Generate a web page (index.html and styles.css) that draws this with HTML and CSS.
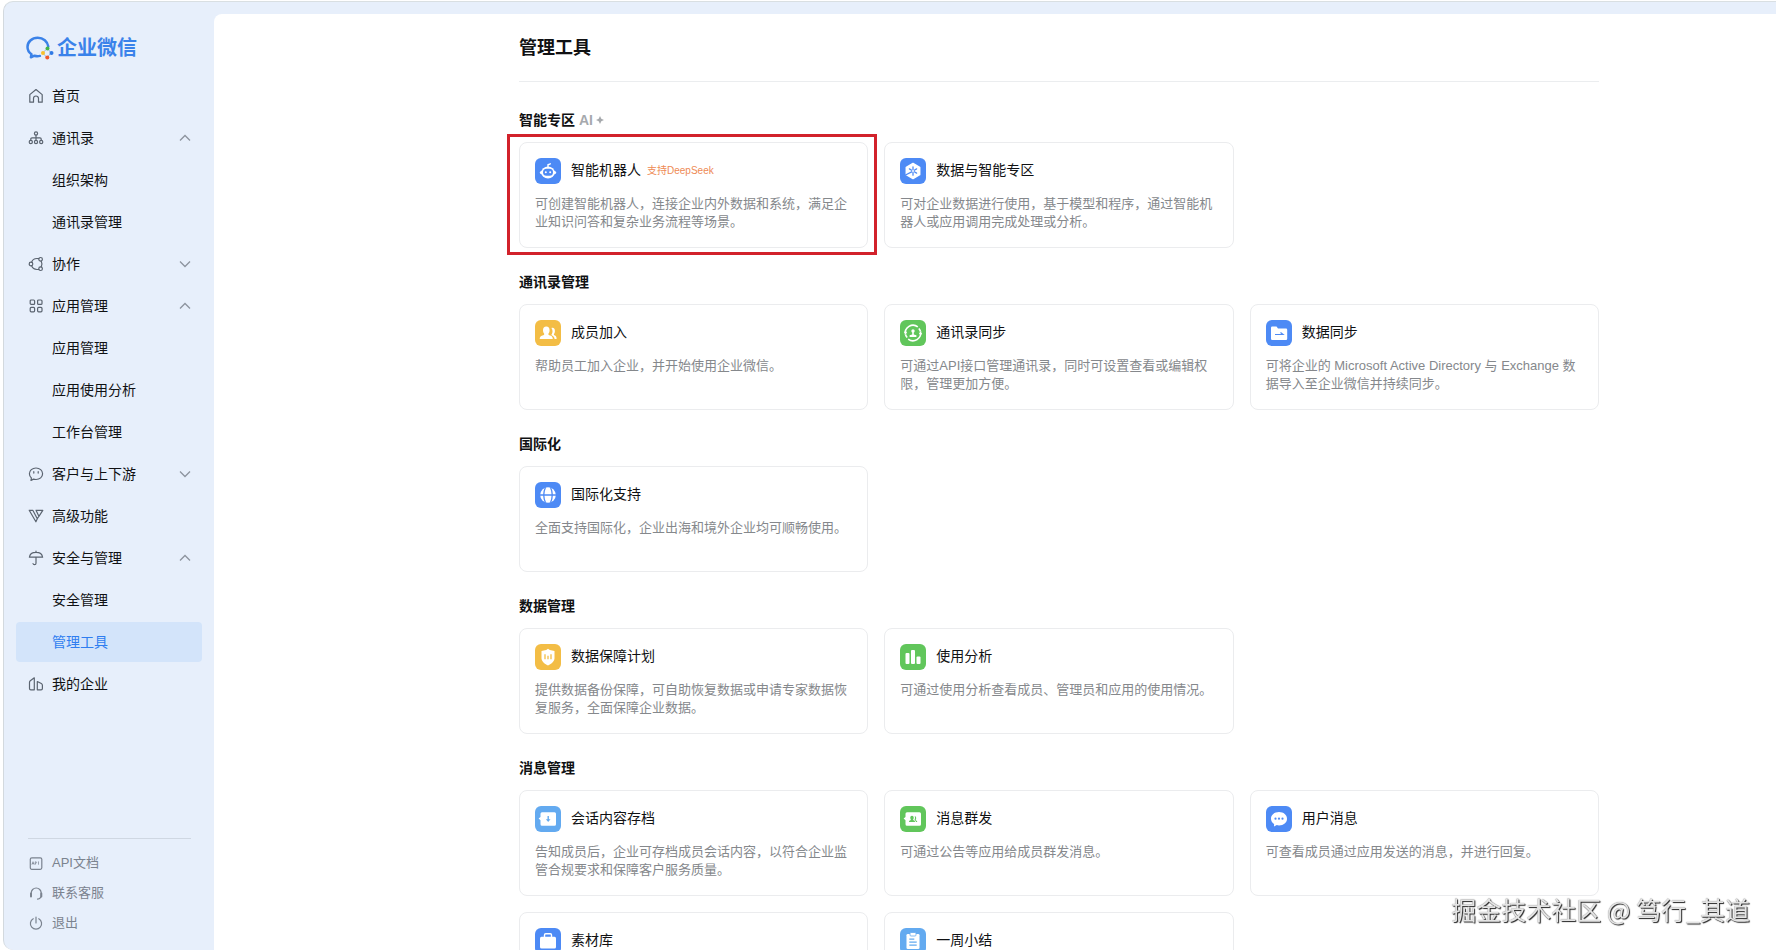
FILE: index.html
```html
<!DOCTYPE html>
<html lang="zh-CN">
<head>
<meta charset="utf-8">
<meta name="viewport" content="width=device-width, initial-scale=1">
<title>管理工具 - 企业微信</title>
<link rel="stylesheet" href="styles.css">
</head>
<body>
<div class="app">
  <aside class="sidebar">
    <a class="brand" href="#">
      <svg class="brand-mark" viewBox="0 0 28 24" aria-hidden="true">
        <path d="M22.300 10.500C21.500 5.500 17.300 1.800 11.700 1.800 5.800 1.800 1.500 6 1.500 11c0 3 1.500 5.500 4 7.200L4.900 21.300l3.600-1.600c1.700.5 3.600.6 5.400.2" fill="none" stroke="#3b82e8" stroke-width="2.500" stroke-linejoin="round" stroke-linecap="round"/>
        <path d="M21.500 12.500l3.200 4M24.500 17.500l-3.500 4M20.500 21l-3.300-3.500M17.500 16l3.500-3.200" fill="none" stroke="#9db8d8" stroke-width="1"/>
        <circle cx="21.500" cy="12.600" r="2" fill="#45b649"/>
        <circle cx="25.500" cy="17" r="2" fill="#2f7ae5"/>
        <circle cx="21.300" cy="21.500" r="2" fill="#f0592b"/>
        <circle cx="17" cy="17" r="2" fill="#f8c12c"/>
      </svg>
      <span class="brand-name">企业微信</span>
    </a>
    <nav class="nav" aria-label="主导航">
      <a class="nav-item" href="#">
        <svg class="nav-icon" viewBox="0 0 16 16" aria-hidden="true"><path d="M1.800 6.600L8 1.500l6.200 5.100v7.600h-3.700V10.500a2.500 2.500 0 0 0-5 0v3.700H1.800z"/></svg>
        <span>首页</span>
      </a>
      <button class="nav-item" type="button" aria-expanded="true">
        <svg class="nav-icon" viewBox="0 0 16 16" aria-hidden="true"><circle cx="8" cy="3.500" r="1.600"/><circle cx="2.800" cy="12" r="1.600"/><circle cx="8" cy="12" r="1.600"/><circle cx="13.200" cy="12" r="1.600"/><path d="M8 5.200v5M2.800 10.200V9q0-1.200 1.200-1.200h8q1.200 0 1.200 1.200v1.200"/></svg>
        <span>通讯录</span>
        <svg class="chevron" viewBox="0 0 12 8" aria-hidden="true"><path d="M1 6.500l5-5 5 5"/></svg>
      </button>
      <a class="nav-item nav-sub" href="#">组织架构</a>
      <a class="nav-item nav-sub" href="#">通讯录管理</a>
      <button class="nav-item" type="button" aria-expanded="false">
        <svg class="nav-icon" viewBox="0 0 16 16" aria-hidden="true"><circle cx="3" cy="8" r="1.800"/><circle cx="12.600" cy="3.300" r="1.800"/><circle cx="12.600" cy="12.700" r="1.800"/><path d="M3.600 6.200C4.600 3.600 7 2 10.800 2.700M3.600 9.800c1 2.600 3.400 4.200 7.200 3.500M13.200 5.100c1 2 1 3.800 0 5.800"/></svg>
        <span>协作</span>
        <svg class="chevron" viewBox="0 0 12 8" aria-hidden="true"><path d="M1 1.500l5 5 5-5"/></svg>
      </button>
      <button class="nav-item" type="button" aria-expanded="true">
        <svg class="nav-icon" viewBox="0 0 16 16" aria-hidden="true"><rect x="2.200" y="2" width="4.400" height="4.400" rx="1"/><rect x="9.600" y="2" width="4.400" height="4.400" rx="1"/><rect x="2.200" y="9.400" width="4.400" height="4.400" rx="1"/><rect x="9.600" y="9.400" width="4.400" height="4.400" rx="1"/></svg>
        <span>应用管理</span>
        <svg class="chevron" viewBox="0 0 12 8" aria-hidden="true"><path d="M1 6.500l5-5 5 5"/></svg>
      </button>
      <a class="nav-item nav-sub" href="#">应用管理</a>
      <a class="nav-item nav-sub" href="#">应用使用分析</a>
      <a class="nav-item nav-sub" href="#">工作台管理</a>
      <button class="nav-item" type="button" aria-expanded="false">
        <svg class="nav-icon" viewBox="0 0 16 16" aria-hidden="true"><path d="M8 2c3.700 0 6.600 2.500 6.600 5.800S11.700 13.500 8 13.500c-.9 0-1.700-.1-2.500-.4L3 14.400l.4-2.500C2.100 10.900 1.400 9.500 1.400 7.800 1.400 4.500 4.300 2 8 2z"/><path d="M5.800 5.700v1.400M10.200 5.700v1.400"/></svg>
        <span>客户与上下游</span>
        <svg class="chevron" viewBox="0 0 12 8" aria-hidden="true"><path d="M1 1.500l5 5 5-5"/></svg>
      </button>
      <a class="nav-item" href="#">
        <svg class="nav-icon" viewBox="0 0 16 16" aria-hidden="true"><path d="M1.200 2.300h3.600L9.300 10.800 7.900 13.800zM8 2.300h6.800L10.900 8.300zM9.300 10.800l1.600-2.500"/></svg>
        <span>高级功能</span>
      </a>
      <button class="nav-item" type="button" aria-expanded="true">
        <svg class="nav-icon" viewBox="0 0 16 16" aria-hidden="true"><path d="M1.400 7.200C1.800 4 4.500 2.300 8 2.300s6.200 1.700 6.600 4.900zM8 2.300V1M8 7.200v6q0 1.500-1.500 1.500-1.300 0-1.500-1.200"/></svg>
        <span>安全与管理</span>
        <svg class="chevron" viewBox="0 0 12 8" aria-hidden="true"><path d="M1 6.500l5-5 5 5"/></svg>
      </button>
      <a class="nav-item nav-sub" href="#">安全管理</a>
      <a class="nav-item nav-sub is-active" href="#" aria-current="page">管理工具</a>
      <a class="nav-item" href="#">
        <svg class="nav-icon" viewBox="0 0 16 16" aria-hidden="true"><path d="M1.500 12.500V6.500q0-1 .8-1.700L6.300 1.800v12h-3.500q-1.300 0-1.300-1.300M9.300 5.500l4 2q1.100.6 1.100 1.700v3.300q0 1.300-1.300 1.300H9.300z"/></svg>
        <span>我的企业</span>
      </a>
    </nav>
    <div class="sidebar-foot">
      <a class="foot-link" href="#">
        <svg class="nav-icon" viewBox="0 0 16 16" aria-hidden="true"><rect x="2.300" y="2.800" width="11.500" height="11.500" rx="1.500"/><path class="hairline" d="M4 9.300l1-2.600 1 2.600M4.400 8.600h1.300M7.300 9.300V6.800h.9q.7.700 0 1.400h-.9M10.500 9.300V6.800"/></svg>
        <span>API文档</span>
      </a>
      <a class="foot-link" href="#">
        <svg class="nav-icon" viewBox="0 0 16 16" aria-hidden="true"><path d="M3.200 10.500V8a5 5 0 0 1 10 0v2.500q0 3-3.700 3.700"/><path class="thick" d="M3 8.500v3M13.300 8.500v3"/></svg>
        <span>联系客服</span>
      </a>
      <a class="foot-link" href="#">
        <svg class="nav-icon" viewBox="0 0 16 16" aria-hidden="true"><path d="M8 2v6M5.200 3.700a5.600 5.600 0 1 0 5.600 0"/></svg>
        <span>退出</span>
      </a>
    </div>
  </aside>

  <main class="main">
    <div class="content">
      <h1 class="page-title">管理工具</h1>

      <section class="section">
        <h2 class="section-title">智能专区
          <span class="ai-mark">AI<svg viewBox="0 0 8 8" aria-hidden="true"><path d="M4 0l1.300 2.700L8 4 5.300 5.300 4 8 2.700 5.300 0 4l2.700-1.300z"/></svg></span>
        </h2>
        <div class="cards">
          <a class="card is-marked" href="#">
            <div class="card-head">
              <svg class="card-icon" viewBox="0 0 26 26" aria-hidden="true"><rect class="blue" width="26" height="26" rx="6"/><path d="M13 9.500V6.800l2.300-1" fill="none" stroke="#fff" stroke-width="1.400" stroke-linecap="round"/><ellipse cx="13" cy="14.500" rx="8.300" ry="3" fill="#fff"/><ellipse cx="13" cy="14.500" rx="6.700" ry="6" fill="#fff"/><rect class="blue" x="8" y="10.800" width="10" height="7" rx="3.500"/><circle cx="10.800" cy="14.200" r="1" fill="#fff"/><circle cx="15.200" cy="14.200" r="1" fill="#fff"/></svg>
              <h3 class="card-title">智能机器人</h3>
              <span class="tag">支持DeepSeek</span>
            </div>
            <p class="card-text">可创建智能机器人，连接企业内外数据和系统，满足企业知识问答和复杂业务流程等场景。</p>
          </a>
          <a class="card" href="#">
            <div class="card-head">
              <svg class="card-icon" viewBox="0 0 26 26" aria-hidden="true"><rect class="blue" width="26" height="26" rx="6"/><path d="M13 5.500l6.700 3.800v7.400L13 20.500l-6.700-3.800V9.300z" fill="#fff" stroke="#fff" stroke-width="1.500" stroke-linejoin="round"/><path d="M13 8.800v2.700M13 14.500v2.700M9.400 10.900l2.300 1.300M14.300 13.800l2.300 1.300M16.600 10.900l-2.300 1.300M11.700 13.800L5.500 17" stroke="#4d8af5" stroke-width="1.300" stroke-linecap="round"/></svg>
              <h3 class="card-title">数据与智能专区</h3>
            </div>
            <p class="card-text">可对企业数据进行使用，基于模型和程序，通过智能机器人或应用调用完成处理或分析。</p>
          </a>
        </div>
      </section>

      <section class="section">
        <h2 class="section-title">通讯录管理</h2>
        <div class="cards">
          <a class="card" href="#">
            <div class="card-head">
              <svg class="card-icon" viewBox="0 0 26 26" aria-hidden="true"><rect class="yellow" width="26" height="26" rx="6"/><path d="M16.300 14.900c.9-1.200 1.300-2.500 1.200-4-.1-1.300-.5-2.200-1.100-2.900 2.400-.7 3.700.9 3.500 3.200-.1 1.500-.5 2.100-.9 2.700-.4 1 .1 1.200 1 1.600 1.200.6 1.600 1.500 1.600 3.400h-2c-.2-2.300-1.500-3.200-3.300-4z" fill="#fff"/><path d="M11.300 6.500c2.100 0 3.400 1.400 3.300 3.900-.1 1.700-.6 2.500-1.100 3.100-.5 1.300.2 1.500 1.700 2.100 1.900.8 2.500 1.500 2.600 3.400H4.700c.1-1.900.8-2.600 2.700-3.400 1.500-.6 2.200-.8 1.700-2.100C8.600 12.900 8.100 12.100 8 10.400c-.1-2.500 1.200-3.900 3.300-3.900z" fill="#fff"/></svg>
              <h3 class="card-title">成员加入</h3>
            </div>
            <p class="card-text">帮助员工加入企业，并开始使用企业微信。</p>
          </a>
          <a class="card" href="#">
            <div class="card-head">
              <svg class="card-icon" viewBox="0 0 26 26" aria-hidden="true"><rect class="green" width="26" height="26" rx="6"/><path d="M5.500 14.500a7.700 7.700 0 0 1 12.300-7.600M20.500 11.500a7.700 7.700 0 0 1-12.300 7.600" fill="none" stroke="#fff" stroke-width="1.600"/><path d="M18.800 8.500a7.500 7.500 0 0 1 1.700 3M7.200 17.500a7.500 7.500 0 0 1-1.700-3" fill="none" stroke="#fff" stroke-width="1.600"/><path d="M3.800 12.800l1.700-2.500 1.800 2.900zM22.200 13.200l-1.700 2.500-1.800-2.900z" fill="#fff"/><circle cx="13" cy="10.900" r="1.700" fill="#fff"/><path d="M12.200 12h1.600v2.500l2.600.8v1.600H9.600v-1.600l2.600-.8z" fill="#fff"/></svg>
              <h3 class="card-title">通讯录同步</h3>
            </div>
            <p class="card-text">可通过API接口管理通讯录，同时可设置查看或编辑权限，管理更加方便。</p>
          </a>
          <a class="card" href="#">
            <div class="card-head">
              <svg class="card-icon" viewBox="0 0 26 26" aria-hidden="true"><rect class="blue" width="26" height="26" rx="6"/><path d="M5 7.700q0-1.200 1.200-1.200h4.300l1.500 2h8q1.200 0 1.200 1.200v9q0 1.200-1.200 1.200H6.200Q5 19.900 5 18.700z" fill="#fff"/><path d="M9 14.500h8l-2.500-2" fill="none" stroke="#4d8af5" stroke-width="1.200"/></svg>
              <h3 class="card-title">数据同步</h3>
            </div>
            <p class="card-text">可将企业的 Microsoft Active Directory 与 Exchange 数据导入至企业微信并持续同步。</p>
          </a>
        </div>
      </section>

      <section class="section">
        <h2 class="section-title">国际化</h2>
        <div class="cards">
          <a class="card" href="#">
            <div class="card-head">
              <svg class="card-icon" viewBox="0 0 26 26" aria-hidden="true"><rect class="blue" width="26" height="26" rx="6"/><circle cx="13" cy="13" r="7.800" fill="#fff"/><path d="M5 13h16M10.500 5.300Q7 13 10.500 20.700M15.500 5.300q3.500 7.700 0 15.400" fill="none" stroke="#4d8af5" stroke-width="1.300"/></svg>
              <h3 class="card-title">国际化支持</h3>
            </div>
            <p class="card-text">全面支持国际化，企业出海和境外企业均可顺畅使用。</p>
          </a>
        </div>
      </section>

      <section class="section">
        <h2 class="section-title">数据管理</h2>
        <div class="cards">
          <a class="card" href="#">
            <div class="card-head">
              <svg class="card-icon" viewBox="0 0 26 26" aria-hidden="true"><rect class="yellow" width="26" height="26" rx="6"/><path d="M13 4.800l1.800 1.300 4.700.9v7.200c0 3-2.700 5.300-6.500 7.200-3.800-1.900-6.500-4.200-6.500-7.200V7l4.700-.9z" fill="#fff"/><path d="M10 10.300v5M13 11.800v3.500M16 10.300v5" stroke="#f3bd45" stroke-width="1.300"/></svg>
              <h3 class="card-title">数据保障计划</h3>
            </div>
            <p class="card-text">提供数据备份保障，可自助恢复数据或申请专家数据恢复服务，全面保障企业数据。</p>
          </a>
          <a class="card" href="#">
            <div class="card-head">
              <svg class="card-icon" viewBox="0 0 26 26" aria-hidden="true"><rect class="green" width="26" height="26" rx="6"/><rect x="5.500" y="9" width="4" height="11" rx="1" fill="#fff"/><rect x="11" y="6" width="4" height="14" rx="1" fill="#fff"/><rect x="16.500" y="12.500" width="4" height="7.500" rx="1" fill="#fff"/></svg>
              <h3 class="card-title">使用分析</h3>
            </div>
            <p class="card-text">可通过使用分析查看成员、管理员和应用的使用情况。</p>
          </a>
        </div>
      </section>

      <section class="section">
        <h2 class="section-title">消息管理</h2>
        <div class="cards">
          <a class="card" href="#">
            <div class="card-head">
              <svg class="card-icon" viewBox="0 0 26 26" aria-hidden="true"><rect class="sky" width="26" height="26" rx="6"/><path d="M7 6.200h12.500q1.500 0 1.500 1.500v10.600q0 1.500-1.500 1.500H7q-1.500 0-1.500-1.500v-4L3.600 12.600l1.900-1.600V7.700q0-1.500 1.500-1.500z" fill="#fff"/><path d="M13.200 10v4.500" stroke="#63aaf0" stroke-width="1.400"/><path d="M10.900 13.300h4.600l-2.300 2.800z" fill="#63aaf0"/></svg>
              <h3 class="card-title">会话内容存档</h3>
            </div>
            <p class="card-text">告知成员后，企业可存档成员会话内容，以符合企业监管合规要求和保障客户服务质量。</p>
          </a>
          <a class="card" href="#">
            <div class="card-head">
              <svg class="card-icon" viewBox="0 0 26 26" aria-hidden="true"><rect class="green" width="26" height="26" rx="6"/><path d="M7 6.200h12.500q1.500 0 1.500 1.500v10.600q0 1.500-1.500 1.500H7q-1.500 0-1.500-1.500v-4L3.600 12.600l1.900-1.600V7.700q0-1.500 1.500-1.500z" fill="#fff"/><path d="M12 9.800c1.300 0 1.800 1 1.700 2.200-.1 1-.8 1.500-.5 2 .3.400 1.800.5 1.900 2H8.900c.1-1.500 1.600-1.600 1.900-2 .3-.5-.4-1-.5-2-.1-1.200.4-2.200 1.700-2.200zM14.700 10c1.600 0 1.900 2.500 1 3.900.2.500 1.500.6 1.600 2.100h-1.400c0-1.200-.8-1.800-1.400-2.100.7-1.200.7-2.600.2-3.900z" fill="#61c65b"/></svg>
              <h3 class="card-title">消息群发</h3>
            </div>
            <p class="card-text">可通过公告等应用给成员群发消息。</p>
          </a>
          <a class="card" href="#">
            <div class="card-head">
              <svg class="card-icon" viewBox="0 0 26 26" aria-hidden="true"><rect class="blue" width="26" height="26" rx="6"/><path d="M13 6c4.600 0 8 2.900 8 6.700s-3.400 6.700-8 6.700c-.8 0-1.500-.1-2.200-.3L8 20.500l.1-2.500C6.200 16.800 5 14.900 5 12.700 5 8.900 8.400 6 13 6z" fill="#fff"/><circle cx="9.500" cy="12.700" r="1.100" class="blue"/><circle cx="13" cy="12.700" r="1.100" class="blue"/><circle cx="16.500" cy="12.700" r="1.100" class="blue"/></svg>
              <h3 class="card-title">用户消息</h3>
            </div>
            <p class="card-text">可查看成员通过应用发送的消息，并进行回复。</p>
          </a>
          <a class="card" href="#">
            <div class="card-head">
              <svg class="card-icon" viewBox="0 0 26 26" aria-hidden="true"><rect class="blue" width="26" height="26" rx="6"/><path d="M9.500 9V7q0-1.200 1.200-1.200h4.600q1.200 0 1.200 1.200v2" fill="none" stroke="#fff" stroke-width="1.400"/><rect x="5" y="8.800" width="16" height="11.700" rx="1.500" fill="#fff"/></svg>
              <h3 class="card-title">素材库</h3>
            </div>
          </a>
          <a class="card" href="#">
            <div class="card-head">
              <svg class="card-icon" viewBox="0 0 26 26" aria-hidden="true"><rect class="sky" width="26" height="26" rx="6"/><rect x="6.500" y="6" width="13" height="15" rx="1.300" fill="#fff"/><rect x="10" y="4.500" width="6" height="3.500" rx="1" fill="#fff" stroke="#63aaf0" stroke-width=".8"/><path d="M9.300 11.200h5M9.300 14.200h7.400M9.300 17.200h7.400" stroke="#63aaf0" stroke-width="1.200"/></svg>
              <h3 class="card-title">一周小结</h3>
            </div>
          </a>
        </div>
      </section>
    </div>
  </main>
</div>
<div class="watermark">掘金技术社区 @ 笃行_其道</div>
</body>
</html>
```

FILE: styles.css
```css
* {
  box-sizing: border-box;
}

body {
  margin: 0;
  background: #fff;
  color: #101113;
  font-family: "Liberation Sans", "Noto Sans CJK SC", sans-serif;
  font-size: 14px;
}

a {
  color: inherit;
  text-decoration: none;
}

h1,
h2,
h3,
p {
  margin: 0;
}

.app {
  display: flex;
  height: 100vh;
  padding-left: 3px;
  padding-top: 1px;
  overflow: hidden;
}

/* Sidebar */

.sidebar {
  display: flex;
  flex: 0 0 211px;
  flex-direction: column;
  padding: 30px 12px 12px;
  border-top: 1px solid #d9dfe2;
  border-left: 1px solid #d3d9de;
  border-radius: 10px 0 0 10px;
  background: #e7effb;
}

.brand {
  display: flex;
  align-items: center;
  gap: 3px;
  height: 32px;
  margin: 0 0 12px 10px;
}

.brand-mark {
  width: 28px;
  height: 24px;
}

.brand-name {
  color: #3a82ea;
  font-size: 20px;
  font-weight: 700;
  line-height: 32px;
}

.nav {
  display: flex;
  flex-direction: column;
  gap: 2px;
}

.nav-item {
  display: flex;
  align-items: center;
  gap: 8px;
  width: 100%;
  height: 40px;
  padding: 0 11px 0 12px;
  border: 0;
  border-radius: 4px;
  background: transparent;
  color: #101113;
  font-family: inherit;
  font-size: 14px;
  line-height: 20px;
  text-align: left;
}

.nav-sub {
  padding-left: 36px;
}

.nav-item.is-active {
  background: #d3e4fa;
  color: #2f7df0;
}

.nav-icon {
  flex: none;
  width: 16px;
  height: 16px;
  fill: none;
  stroke: #5b6470;
  stroke-width: 1.2;
  stroke-linecap: round;
  stroke-linejoin: round;
}

.nav-icon .hairline {
  stroke-width: 0.7;
}

.nav-icon .thick {
  stroke-width: 2;
}

.chevron {
  width: 12px;
  height: 8px;
  margin-left: auto;
  fill: none;
  stroke: #8d949e;
  stroke-width: 1.3;
}

.sidebar-foot {
  margin: auto 11px 0 12px;
  padding-top: 9px;
  border-top: 1px solid #cfd7e2;
}

.foot-link {
  display: flex;
  align-items: center;
  gap: 8px;
  height: 30px;
  color: #7b838f;
  font-size: 13px;
  line-height: 20px;
}

.foot-link .nav-icon {
  stroke: #7b838f;
}

/* Main panel */

.main {
  flex: 1;
  min-width: 0;
  padding-top: 12px;
  overflow: hidden;
  background: linear-gradient(#e7effb, #e7effb) top / 100% 30px no-repeat;
  border-top: 1px solid #d9dfe2;
}

.content {
  display: grid;
  grid-template-columns: minmax(24px, 305fr) minmax(0, 1080px) minmax(24px, 177fr);
  padding: 19px 0 24px;
  border-top-left-radius: 8px;
  background: #fff;
}

.content > * {
  grid-column: 2;
}

.page-title {
  padding-bottom: 18px;
  border-bottom: 1px solid #ebedef;
  font-size: 18px;
  font-weight: 700;
  line-height: 30px;
}

.section {
  margin-top: 23px;
}

.page-title + .section {
  margin-top: 27px;
}

.section-title {
  display: flex;
  align-items: center;
  gap: 4px;
  margin-bottom: 11px;
  font-size: 14px;
  font-weight: 700;
  line-height: 22px;
}

.ai-mark {
  display: flex;
  align-items: center;
  gap: 3px;
  color: #a6a9ad;
}

.ai-mark svg {
  width: 8px;
  height: 8px;
  fill: currentColor;
}

.cards {
  display: grid;
  grid-template-columns: repeat(3, minmax(0, 1fr));
  gap: 16px;
}

.card {
  position: relative;
  min-height: 106px;
  padding: 15px;
  border: 1px solid #ebecee;
  border-radius: 8px;
  background: #fff;
}

.card.is-marked::after {
  position: absolute;
  inset: -9px -10px -8px -13px;
  border: 3px solid #d2222b;
  content: "";
}

.card-head {
  display: flex;
  align-items: center;
  height: 26px;
}

.card-icon {
  flex: none;
  width: 26px;
  height: 26px;
  margin-right: 10px;
}

.blue {
  fill: #4d8af5;
}

.sky {
  fill: #63aaf0;
}

.green {
  fill: #61c65b;
}

.yellow {
  fill: #f3bd45;
}

.card-title {
  padding-bottom: 2px;
  font-size: 14px;
  font-weight: 400;
  line-height: 20px;
}

.tag {
  margin-left: 6px;
  color: #ee8a55;
  font-size: 10px;
  line-height: 16px;
}

.card-text {
  margin-top: 11px;
  color: #85888c;
  font-size: 13px;
  line-height: 18px;
}

.watermark {
  position: fixed;
  right: 26px;
  bottom: 23px;
  color: #e4e4e4;
  font-family: "Noto Sans CJK SC", sans-serif;
  font-size: 25px;
  line-height: 36px;
  text-shadow: 1px 1px 1px #222, 0 0 1px #777;
  pointer-events: none;
}
```
